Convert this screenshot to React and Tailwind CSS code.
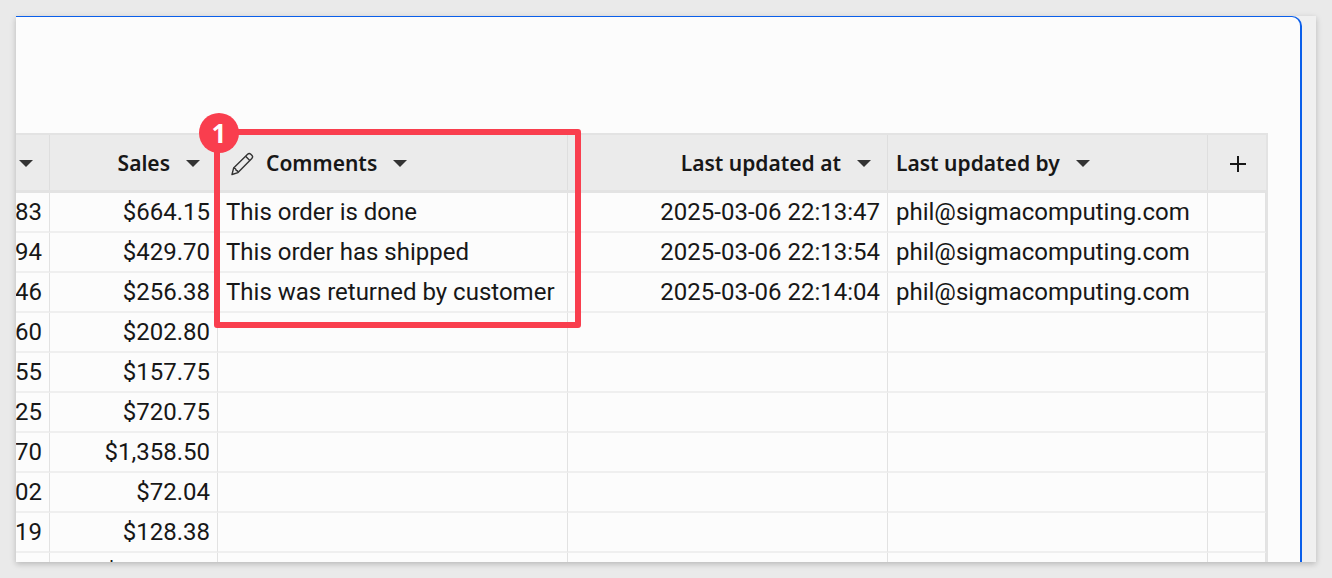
const rows = [
  ['83', '$664.15', 'This order is done', '2025-03-06 22:13:47', 'phil@sigmacomputing.com'],
  ['94', '$429.70', 'This order has shipped', '2025-03-06 22:13:54', 'phil@sigmacomputing.com'],
  ['46', '$256.38', 'This was returned by customer', '2025-03-06 22:14:04', 'phil@sigmacomputing.com'],
  ['60', '$202.80'],
  ['55', '$157.75'],
  ['25', '$720.75'],
  ['70', '$1,358.50'],
  ['02', '$72.04'],
  ['19', '$128.38'],
  ['', '$1,215.30'],
]

function Caret() {
  return <span className="h-0 w-0 shrink-0 border-x-[7px] border-t-[7px] border-x-transparent border-t-[#333]" />
}

function PencilIcon() {
  return (
    <svg viewBox="0 0 24 24" className="h-6 w-6 shrink-0" fill="none" stroke="#333" strokeWidth="1.4" strokeLinejoin="round">
      <path d="M2 22.5l1.6-6.4L17.6 2.2c.9-.9 2.3-.9 3.2 0l1 1c.9.9.9 2.3 0 3.2L8 20.6 2 22.5z" />
      <path d="M3.6 16.1c1.8.2 2.6 1 2.6 2.4 1.2-.1 1.8.7 1.8 2.1M15.6 4.2l4.2 4.2" />
    </svg>
  )
}

function HeaderCell({ children, className = '' }) {
  return (
    <div className={`flex items-center border-r border-[#dedede] pt-[2px] font-['Noto_Sans',sans-serif] text-[21px] font-semibold text-[#171717] ${className}`}>
      {children}
    </div>
  )
}

function Cell({ children, right }) {
  return (
    <div className={`flex h-10 items-center overflow-hidden whitespace-nowrap border-b-2 border-r border-[#efefef] border-r-[#e2e2e2] ${right ? 'justify-end pr-[7px]' : 'pl-[8px]'}`}>
      {children}
    </div>
  )
}

export default function App() {
  return (
    <div className="relative h-[578px] w-[1332px] overflow-hidden bg-[#eaeaea] p-4">
      <div className="flex h-[546px] w-[1300px] bg-[#f0f0f0] shadow-[0_2px_6px_rgba(0,0,0,0.22)]">
        <div className="h-full w-[1286px] overflow-hidden rounded-tr-[10px] border-r-2 border-t border-[#0b5fea] bg-[#fcfcfc] pt-[116px]">
          <div className="w-[1252px] border-r-2 border-t-2 border-[#e3e3e3]">
            <div className="grid h-[58px] grid-cols-[34px_168px_350px_320px_320px_58px] border-b-[3px] border-[#e3e3e3] bg-[#ebebeb]">
              <HeaderCell className="justify-end pr-[16px]"><Caret /></HeaderCell>
              <HeaderCell className="justify-end gap-[16px] pr-[17px]">Sales <Caret /></HeaderCell>
              <HeaderCell className="gap-[12px] pl-[12px]">
                <PencilIcon />
                <span className="mr-[4px]">Comments</span>
                <Caret />
              </HeaderCell>
              <HeaderCell className="justify-end gap-[16px] pr-[16px]">Last updated at <Caret /></HeaderCell>
              <HeaderCell className="gap-[16px] pl-[8px]">Last updated by <Caret /></HeaderCell>
              <div className="flex items-center justify-center pl-[2px] pt-[2px] text-[#171717]">
                <svg viewBox="0 0 16 16" className="h-4 w-4" stroke="currentColor" strokeWidth="2"><path d="M8 0v16M0 8h16" /></svg>
              </div>
            </div>
            <div className="grid grid-cols-[34px_168px_350px_320px_320px_58px] font-['Roboto',sans-serif] text-[24px] text-[#171717]">
              {rows.map((r, i) => (
                <div key={i} className="contents">
                  <Cell right>{r[0]}</Cell>
                  <Cell right>{r[1]}</Cell>
                  <Cell>{r[2]}</Cell>
                  <Cell right>{r[3]}</Cell>
                  <Cell>{r[4]}</Cell>
                  <Cell />
                </div>
              ))}
            </div>
          </div>
        </div>
      </div>

      {/* callout over the Comments column */}
      <div className="absolute left-[214px] top-[129px] h-[199px] w-[367px] rounded-[3px] border-[6px] border-[#f93e4e]" />
      <div className="absolute left-[199px] top-[113px] flex h-10 w-10 items-center justify-center rounded-full bg-[#f93e4e] font-['Noto_Sans',sans-serif] text-[26px] font-bold text-white">
        1
      </div>
    </div>
  )
}
